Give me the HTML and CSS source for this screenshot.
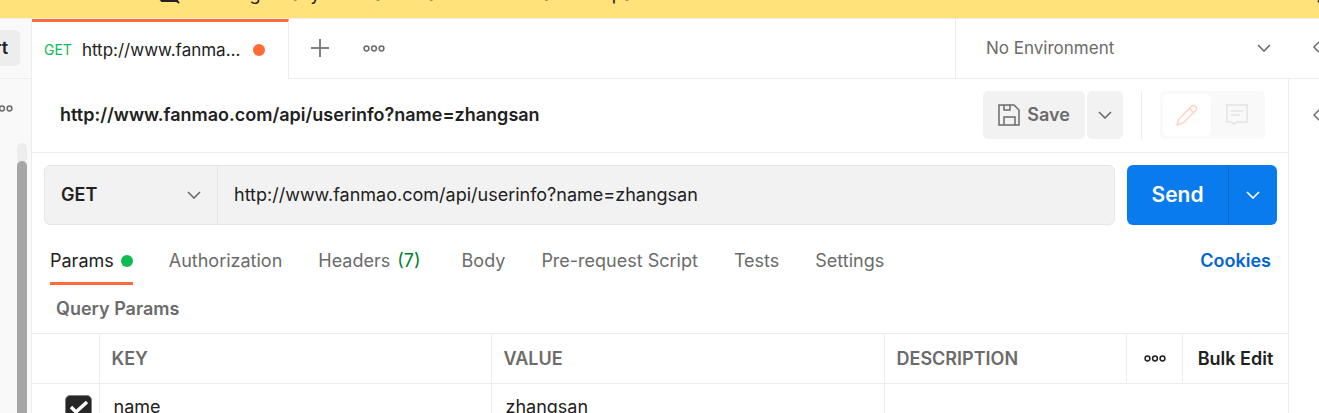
FILE: index.html
```
<!DOCTYPE html>
<html lang="en">
<head>
<meta charset="utf-8">
<title>API request</title>
<link rel="stylesheet" href="styles.css">
</head>
<body>
<svg class="defs" width="0" height="0" aria-hidden="true">
  <symbol id="chevron" viewBox="0 0 14 8"><path d="M1 1l6 6 6-6" fill="none" stroke="currentColor" stroke-width="1.6"/></symbol>
  <symbol id="dots" viewBox="0 0 22 7"><g fill="none" stroke="currentColor" stroke-width="1.5"><circle cx="3.5" cy="3.5" r="2.4"/><circle cx="11" cy="3.5" r="2.4"/><circle cx="18.5" cy="3.5" r="2.4"/></g></symbol>
</svg>
<div class="banner">
  <svg class="banner-icon" width="26" height="20" viewBox="0 0 26 20"><path d="M3 2h18v15H6l-3-3z" fill="none" stroke="#212121" stroke-width="2"/><path d="M15 11l8 8" stroke="#212121" stroke-width="2"/></svg>
  <p class="banner-text">Working locally in Scratch Pad. <a href="#" class="banner-link">Switch to a Workspace</a></p>
  <button class="banner-close" aria-label="Dismiss"><svg width="14" height="14" viewBox="0 0 14 14"><path d="M1 1l12 12M13 1L1 13" stroke="#212121" stroke-width="2"/></svg></button>
</div>
<div class="app">
  <aside class="sidebar">
    <div class="sidebar-top"><button class="import">Import</button></div>
    <div class="sidebar-body">
      <button class="icon-button sidebar-more" aria-label="More"><svg width="22" height="7"><use href="#dots"/></svg></button>
      <div class="scroll-track"><div class="scroll-thumb"></div></div>
    </div>
  </aside>
  <main class="workspace">
    <div class="tab-bar">
      <a href="#" class="tab"><span class="tab-method">GET</span><span class="tab-name">http://www.fanmao.com/api/userinfo</span><span class="unsaved"></span></a>
      <div class="tab-tools">
        <button class="icon-button" aria-label="New tab"><svg width="20" height="20" viewBox="0 0 20 20"><path d="M10 1v18M1 10h18" stroke="#808080" stroke-width="2"/></svg></button>
        <button class="icon-button" aria-label="Tab options"><svg width="22" height="7"><use href="#dots"/></svg></button>
      </div>
      <button class="environment"><span>No Environment</span><svg width="14" height="8"><use href="#chevron"/></svg></button>
    </div>
    <header class="request-head">
      <h1 class="request-title">http://www.fanmao.com/api/userinfo?name=zhangsan</h1>
      <div class="save-group">
        <button class="save"><svg width="22" height="22" viewBox="0 0 22 22"><g fill="none" stroke="#6b6b6b" stroke-width="1.5"><path d="M1 1h15l5 5v15H1z"/><path d="M6 1v5h6V1"/><path d="M6 21v-8h11v8"/></g></svg><span>Save</span></button>
        <button class="save-more" aria-label="Save options"><svg width="14" height="8"><use href="#chevron"/></svg></button>
      </div>
      <span class="divider"></span>
      <div class="mode-group">
        <button class="mode mode-active" aria-label="Edit"><svg width="22" height="22" viewBox="0 0 22 22"><g fill="none" stroke="#ffd2c3" stroke-width="1.5" stroke-linejoin="round"><path d="M1 21l2-6L15.500 2.200a2.600 2.600 0 0 1 3.700 0l.600.600a2.600 2.600 0 0 1 0 3.700L7 19z"/><path d="M13.500 4.500l4 4"/></g></svg></button>
        <button class="mode" aria-label="Comments"><svg width="22" height="22" viewBox="0 0 22 22"><g fill="none" stroke="#e3e3e3" stroke-width="1.500"><path d="M1 1h20v17H10.500L8 20.500 5.500 18H1z"/><path d="M5 7h12M5 11h9"/></g></svg></button>
      </div>
    </header>
    <form class="request-line">
      <div class="url-box">
        <button type="button" class="method"><span>GET</span><svg width="14" height="8"><use href="#chevron"/></svg></button>
        <input class="url" aria-label="Request URL" value="http://www.fanmao.com/api/userinfo?name=zhangsan">
      </div>
      <div class="send-group">
        <button type="button" class="send">Send</button>
        <button type="button" class="send-more" aria-label="Send options"><svg width="14" height="8"><use href="#chevron"/></svg></button>
      </div>
    </form>
    <nav class="sections">
      <a href="#" class="section section-active">Params<span class="has-data"></span></a>
      <a href="#" class="section">Authorization</a>
      <a href="#" class="section section-counted">Headers <span class="count">(7)</span></a>
      <a href="#" class="section">Body</a>
      <a href="#" class="section">Pre-request Script</a>
      <a href="#" class="section">Tests</a>
      <a href="#" class="section">Settings</a>
      <a href="#" class="cookies">Cookies</a>
    </nav>
    <h2 class="table-title">Query Params</h2>
    <table class="params">
      <colgroup><col class="col-check"><col class="col-key"><col class="col-value"><col><col class="col-more"><col class="col-bulk"></colgroup>
      <thead>
        <tr><th></th><th>KEY</th><th>VALUE</th><th>DESCRIPTION</th><th class="cell-more"><button class="icon-button dark" aria-label="Columns"><svg width="22" height="7"><use href="#dots"/></svg></button></th><th class="cell-bulk"><button class="bulk">Bulk Edit</button></th></tr>
      </thead>
      <tbody>
        <tr><td class="cell-check"><input type="checkbox" class="check" aria-label="Include name" checked><svg class="tick" width="20" height="16" viewBox="0 0 20 16"><path d="M2 8l5 5L18 3" fill="none" stroke="#fff" stroke-width="3.500"/></svg></td><td>name</td><td>zhangsan</td><td colspan="3"></td></tr>
      </tbody>
    </table>
  </main>
  <aside class="rail">
    <div class="rail-top"><button class="icon-button" aria-label="Environment quick look"><svg width="24" height="16" viewBox="0 0 24 16"><path d="M1 8q11-14 22 0q-11 14-22 0z" fill="none" stroke="currentColor" stroke-width="1.500"/></svg></button></div>
    <div class="rail-body"><button class="icon-button" aria-label="Code"><svg width="24" height="16" viewBox="0 0 24 16"><path d="M8 1L1 8l7 7M16 1l7 7-7 7" fill="none" stroke="currentColor" stroke-width="1.500"/></svg></button></div>
  </aside>
</div>
</body>
</html>
```
FILE: styles.css
```
* { box-sizing: border-box; }
body { margin: 0; height: 100vh; overflow: hidden; display: flex; flex-direction: column; background: #fff; color: #212121; font: 18px/24px Inter, "Liberation Sans", sans-serif; }
button, input { font: inherit; color: inherit; border: 0; padding: 0; margin: 0; background: none; }
a { color: inherit; text-decoration: none; }
h1, h2, p { margin: 0; }
svg { display: block; flex: none; }
.defs { position: absolute; }
.icon-button { color: #6b6b6b; display: flex; }
.dark { color: #212121; }

.banner { flex: none; height: 18px; overflow: hidden; display: flex; align-items: flex-end; gap: 8px; padding: 0 0 12px 156px; background: #ffe27a; }
.banner-icon { margin-bottom: 2px; }
.banner-text { flex: 1; white-space: nowrap; }
.banner-close { margin: 0 -12px 3px 0; }

.app { flex: 1; min-height: 0; display: grid; grid-template-columns: 32px minmax(0, 1fr) 30px; border-top: 1px solid #ededed; }
.sidebar { background: #f9f9f9; border-right: 1px solid #ededed; display: flex; flex-direction: column; overflow: hidden; }
.sidebar-top { height: 60px; flex: none; border-bottom: 1px solid #ededed; display: flex; justify-content: flex-end; align-items: center; padding: 0 11px 2px 0; }
.import { height: 36px; padding: 0 12px; border-radius: 5px; background: #ededed; font-weight: 600; }
.sidebar-body { flex: 1; display: flex; flex-direction: column; align-items: flex-end; padding: 26px 4px 0 0; }
.sidebar-more { margin-right: 14px; }
.sidebar-more svg { margin-right: 0; }
.scroll-track { flex: 1; width: 10px; margin-top: 31px; padding-top: 18px; border-radius: 5px 5px 0 0; background: #ededed; }
.scroll-thumb { height: 100%; border-radius: 5px 5px 0 0; background: #a6a6a6; }

.tab-bar { height: 60px; display: flex; }
.tab { width: 257px; border-top: 3px solid #ff6c37; border-right: 1px solid #ededed; display: flex; align-items: center; padding: 0 23px 2px 12px; font-size: 17px; }
.tab-method { font-size: 14px; color: #0cbb52; margin-right: 10px; }
.tab-name { flex: 1; overflow: hidden; text-overflow: ellipsis; white-space: nowrap; margin-right: 8px; }
.unsaved, .has-data { width: 12px; height: 12px; border-radius: 50%; background: #ff6c37; }
.tab-tools { flex: 1; display: flex; align-items: center; gap: 33px; padding: 0 21px 1px; border-bottom: 1px solid #ededed; }
.environment { width: 334px; display: flex; justify-content: space-between; align-items: center; padding: 0 18px 1px 30px; font-size: 17px; color: #6b6b6b; border-left: 1px solid #ededed; border-bottom: 1px solid #ededed; }

.workspace { overflow: hidden; }
.request-head { height: 74px; display: flex; align-items: center; padding: 0 23px 2px 28px; border-bottom: 1px solid #ededed; border-right: 1px solid #ededed; }
.request-title { flex: 1; font-size: 18px; font-weight: 600; }
.save-group { display: flex; gap: 2px; color: #6b6b6b; }
.save { height: 48px; width: 102px; display: flex; align-items: center; justify-content: center; gap: 7px; background: #f2f2f2; border-radius: 5px; font-weight: 600; }
.save-more { width: 36px; display: flex; align-items: center; justify-content: center; background: #f2f2f2; border-radius: 5px; }
.divider { width: 1px; height: 48px; margin: 0 18px; background: #ededed; }
.mode-group { display: flex; padding: 3px; border-radius: 5px; background: #f9f9f9; }
.mode { width: 48px; height: 42px; display: flex; align-items: center; justify-content: center; border-radius: 5px; }
.mode + .mode { width: 51px; }
.mode-active { background: #fff; }

.request-line { display: flex; gap: 12px; padding: 12px 11px 0 12px; border-right: 1px solid #ededed; }
.url-box { flex: 1; height: 60px; display: flex; border: 1px solid #e6e6e6; border-radius: 6px; background: #f2f2f2; }
.method { width: 173px; display: flex; align-items: center; justify-content: space-between; padding: 0 16px; border-right: 1px solid #e6e6e6; font-weight: 600; }
.method svg { color: #6b6b6b; }
.url { flex: 1; min-width: 0; padding: 0 16px; outline: 0; }
.send-group { width: 150px; height: 60px; display: flex; border-radius: 6px; overflow: hidden; background: #097bed; color: #fff; }
.send { flex: 1; font-size: 21px; font-weight: 600; }
.send-more { width: 49px; display: flex; align-items: center; justify-content: center; border-left: 1px solid #0a6bd0; }

.sections { height: 60px; display: flex; align-items: stretch; gap: 36px; padding: 0 17px 0 18px; color: #6b6b6b; white-space: nowrap; border-right: 1px solid #ededed; }
.section { display: flex; align-items: center; gap: 7px; padding-top: 15px; border-bottom: 3px solid transparent; }
.section-active { color: #212121; border-color: #ff6c37; }
.section-counted { padding-right: 5px; }
.has-data { background: #0cbb52; }
.count { color: #007f31; }
.cookies { margin-left: auto; padding-top: 24px; font-weight: 600; color: #0265d2; }

.table-title { height: 48px; padding: 12px 24px; font-size: 18px; font-weight: 600; color: #6b6b6b; border-right: 1px solid #ededed; }
.params { width: 100%; table-layout: fixed; border-collapse: collapse; }
.params th, .params td { height: 50px; padding: 0 12px; text-align: left; border: 1px solid #ededed; border-left: 0; }
.params th { font-weight: 600; color: #6b6b6b; }
.params td { height: 46px; padding: 0 14px; }
.col-check { width: 67px; }
.col-key { width: 392px; }
.col-value { width: 393px; }
.col-more { width: 56px; }
.col-bulk { width: 106px; }
.params .cell-more { padding: 0 17px; }
.params .cell-bulk { padding: 0; text-align: center; }
.bulk { color: #212121; font-weight: 600; }
.params .cell-check { padding: 4px 7px 0 33px; position: relative; }
.check { display: block; appearance: none; width: 27px; height: 27px; border-radius: 5px; background: #262626; border: 1px solid #808080; }
.tick { position: absolute; left: 37px; top: 15px; pointer-events: none; }

.rail { overflow: hidden; }
.rail-top { height: 60px; display: flex; align-items: center; border-bottom: 1px solid #ededed; padding: 0 0 3px 24px; }
.rail-body { padding: 28px 0 0 24px; }
```
